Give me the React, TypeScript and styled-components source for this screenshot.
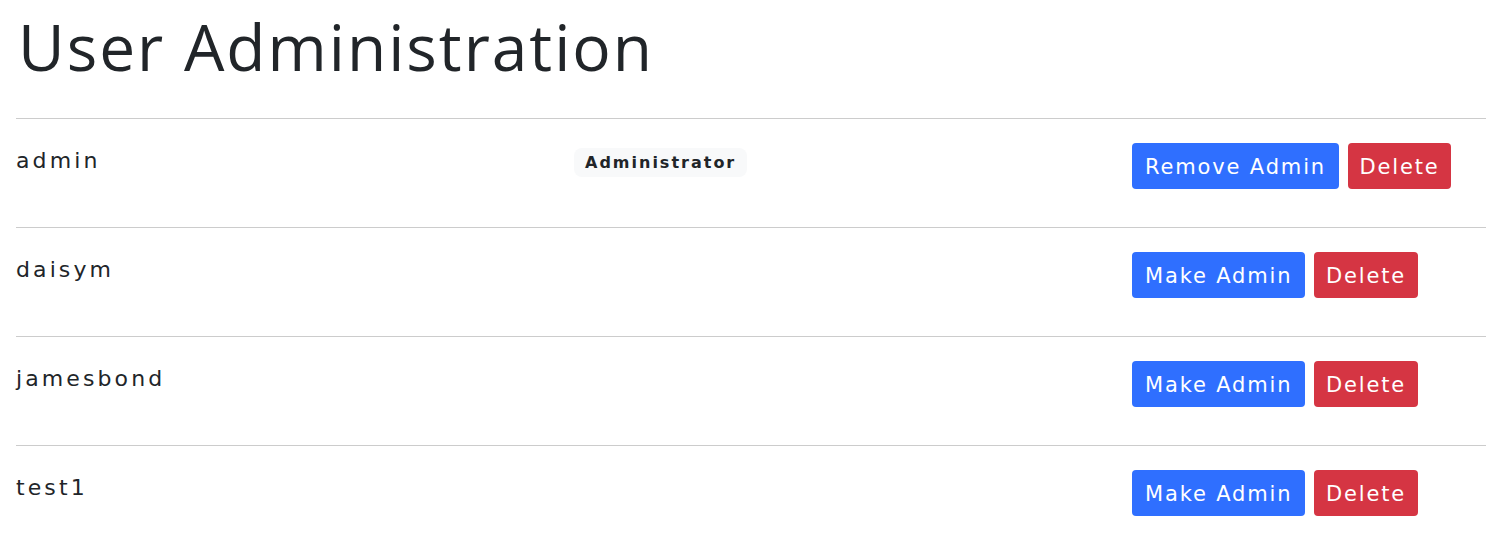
import React from "react";
import styled, { createGlobalStyle } from "styled-components";

const Global = createGlobalStyle`
  html, body { margin: 0; padding: 0; background: #fff; }
  body { font-family: "DejaVu Sans", "Liberation Sans", sans-serif; color: #212529; overflow: hidden; }
`;

const Page = styled.div`
  padding: 0 0 0 16px;
`;

const Title = styled.h1`
  margin: 0;
  padding: 9px 0 32px 2px;
  font-family: "Open Sans", "DejaVu Sans", sans-serif;
  font-weight: 400;
  font-size: 64px;
  line-height: 1.2;
  color: #212529;
  letter-spacing: 2px;
`;

const Row = styled.div`
  display: grid;
  grid-template-columns: 558px 558px 1fr;
  border-top: 1px solid #cccccc;
  padding: 24px 0 38px;
  align-items: start;
`;

const Name = styled.div`
  font-size: 22px;
  line-height: 1.5;
  letter-spacing: 3.1px;
  font-weight: 400;
  color: #212529;
  padding-top: 1px;
`;

const BadgeCell = styled.div``;

const Badge = styled.span`
  display: inline-block;
  margin-top: 5px;
  padding: 4px 11px;
  border-radius: 8px;
  background: #f8f9fa;
  font-size: 16px;
  font-weight: 700;
  letter-spacing: 2px;
  line-height: 21px;
  color: #212529;
`;

const Actions = styled.div`
  display: flex;
  gap: 9px;
`;

const Button = styled.button<{ $variant: "primary" | "danger" }>`
  font-family: inherit;
  font-size: 21px;
  line-height: 1;
  height: 46px;
  letter-spacing: 1.85px;
  padding: 3px ${(p) => (p.$variant === "primary" ? "13px" : "11.5px")} 0;
  border: none;
  border-radius: 4px;
  color: #fff;
  background: ${(p) => (p.$variant === "primary" ? "#2f6fff" : "#d53543")};
  cursor: pointer;
`;

const users = [
  { name: "admin", isAdmin: true },
  { name: "daisym", isAdmin: false },
  { name: "jamesbond", isAdmin: false },
  { name: "test1", isAdmin: false },
];

export default function App() {
  return (
    <>
      <Global />
      <Page>
        <Title>User Administration</Title>
        {users.map((u) => (
          <Row key={u.name}>
            <Name>{u.name}</Name>
            <BadgeCell>{u.isAdmin && <Badge>Administrator</Badge>}</BadgeCell>
            <Actions>
              <Button $variant="primary">{u.isAdmin ? "Remove Admin" : "Make Admin"}</Button>
              <Button $variant="danger">Delete</Button>
            </Actions>
          </Row>
        ))}
      </Page>
    </>
  );
}
